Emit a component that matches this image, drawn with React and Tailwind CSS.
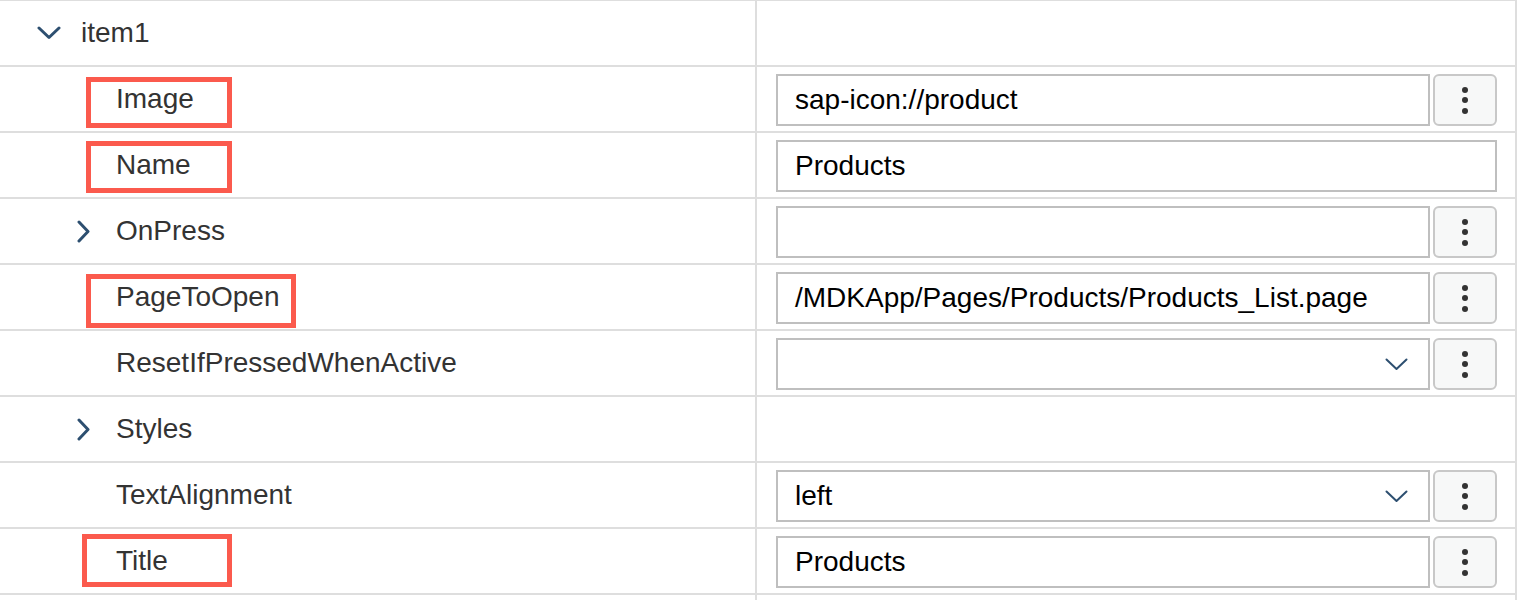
import React from "react";

const LINE = "border-[#dedede]";

function ChevronRight() {
  return (
    <svg width="14" height="23" viewBox="0 0 14 23" fill="none">
      <path d="M2 2 L11 11.5 L2 21" stroke="#2d4f70" strokeWidth="3" strokeLinecap="round" strokeLinejoin="round" />
    </svg>
  );
}

function ChevronDown() {
  return (
    <svg width="24" height="14" viewBox="0 0 24 14" fill="none">
      <path d="M2 2 L12 11.5 L22 2" stroke="#2d4f70" strokeWidth="3" strokeLinecap="round" strokeLinejoin="round" />
    </svg>
  );
}

function SelectChevron() {
  return (
    <svg width="23" height="13" viewBox="0 0 23 13" fill="none">
      <path d="M1.5 1.5 L11.5 11 L21.5 1.5" stroke="#2d4f70" strokeWidth="2" strokeLinecap="round" strokeLinejoin="round" />
    </svg>
  );
}

function DotsButton() {
  return (
    <div className="w-[64px] h-[52px] shrink-0 rounded-[6px] border-2 border-[#c8c8c8] bg-[#f7f8f8] flex flex-col items-center justify-center gap-[4.5px]">
      <div className="w-[6px] h-[6px] rounded-full bg-[#333333]" />
      <div className="w-[6px] h-[6px] rounded-full bg-[#333333]" />
      <div className="w-[6px] h-[6px] rounded-full bg-[#333333]" />
    </div>
  );
}

function Input({ value, select }) {
  return (
    <div className="flex-1 h-[52px] border-2 border-[#bfbfbf] flex items-center pl-[17px] pr-[20px] text-black bg-white">
      <span className="flex-1 leading-none">{value}</span>
      {select && <SelectChevron />}
    </div>
  );
}

function Row({ label, chevron, top, value, select, button, box }) {
  return (
    <div className={`flex h-[66px] border-b-2 ${LINE}`}>
      <div className={`relative w-[757px] shrink-0 border-r-2 ${LINE} flex items-center text-[#333333]`}>
        {top ? (
          <>
            <div className="w-[81px] shrink-0 flex justify-end pr-[20px]">
              <ChevronDown />
            </div>
            <span>{label}</span>
          </>
        ) : (
          <>
            <div className="w-[116px] shrink-0 flex justify-end pr-[25px]">
              {chevron && <ChevronRight />}
            </div>
            <span>{label}</span>
          </>
        )}
        {box && (
          <div
            className={`absolute border-[5px] border-[#fb5a4d] ${box}`}
          />
        )}
      </div>
      <div className="flex-1 flex items-start pt-[7px] pl-[19px] pr-[18px] gap-[3px]">
        {value !== undefined && <Input value={value} select={select} />}
        {button && <DotsButton />}
      </div>
    </div>
  );
}

export default function App() {
  return (
    <div className="w-[1522px] h-[600px] overflow-hidden bg-white font-['Liberation_Sans',Arial,sans-serif] text-[28px]">
      <div className={`w-[1517px] border-t border-r-2 ${LINE}`}>
        <Row label="item1" top />
        <Row label="Image" value="sap-icon://product" button box="left-[86px] top-[10px] w-[146px] h-[51px]" />
        <Row label="Name" value="Products" box="left-[86px] top-[8px] w-[146px] h-[52px]" />
        <Row label="OnPress" chevron value="" button />
        <Row label="PageToOpen" value="/MDKApp/Pages/Products/Products_List.page" button box="left-[86px] top-[9px] w-[210px] h-[54px]" />
        <Row label="ResetIfPressedWhenActive" value="" select button />
        <Row label="Styles" chevron />
        <Row label="TextAlignment" value="left" select button />
        <Row label="Title" value="Products" button box="left-[82px] top-[5px] w-[150px] h-[53px]" />
        <Row label="" />
      </div>
    </div>
  );
}
